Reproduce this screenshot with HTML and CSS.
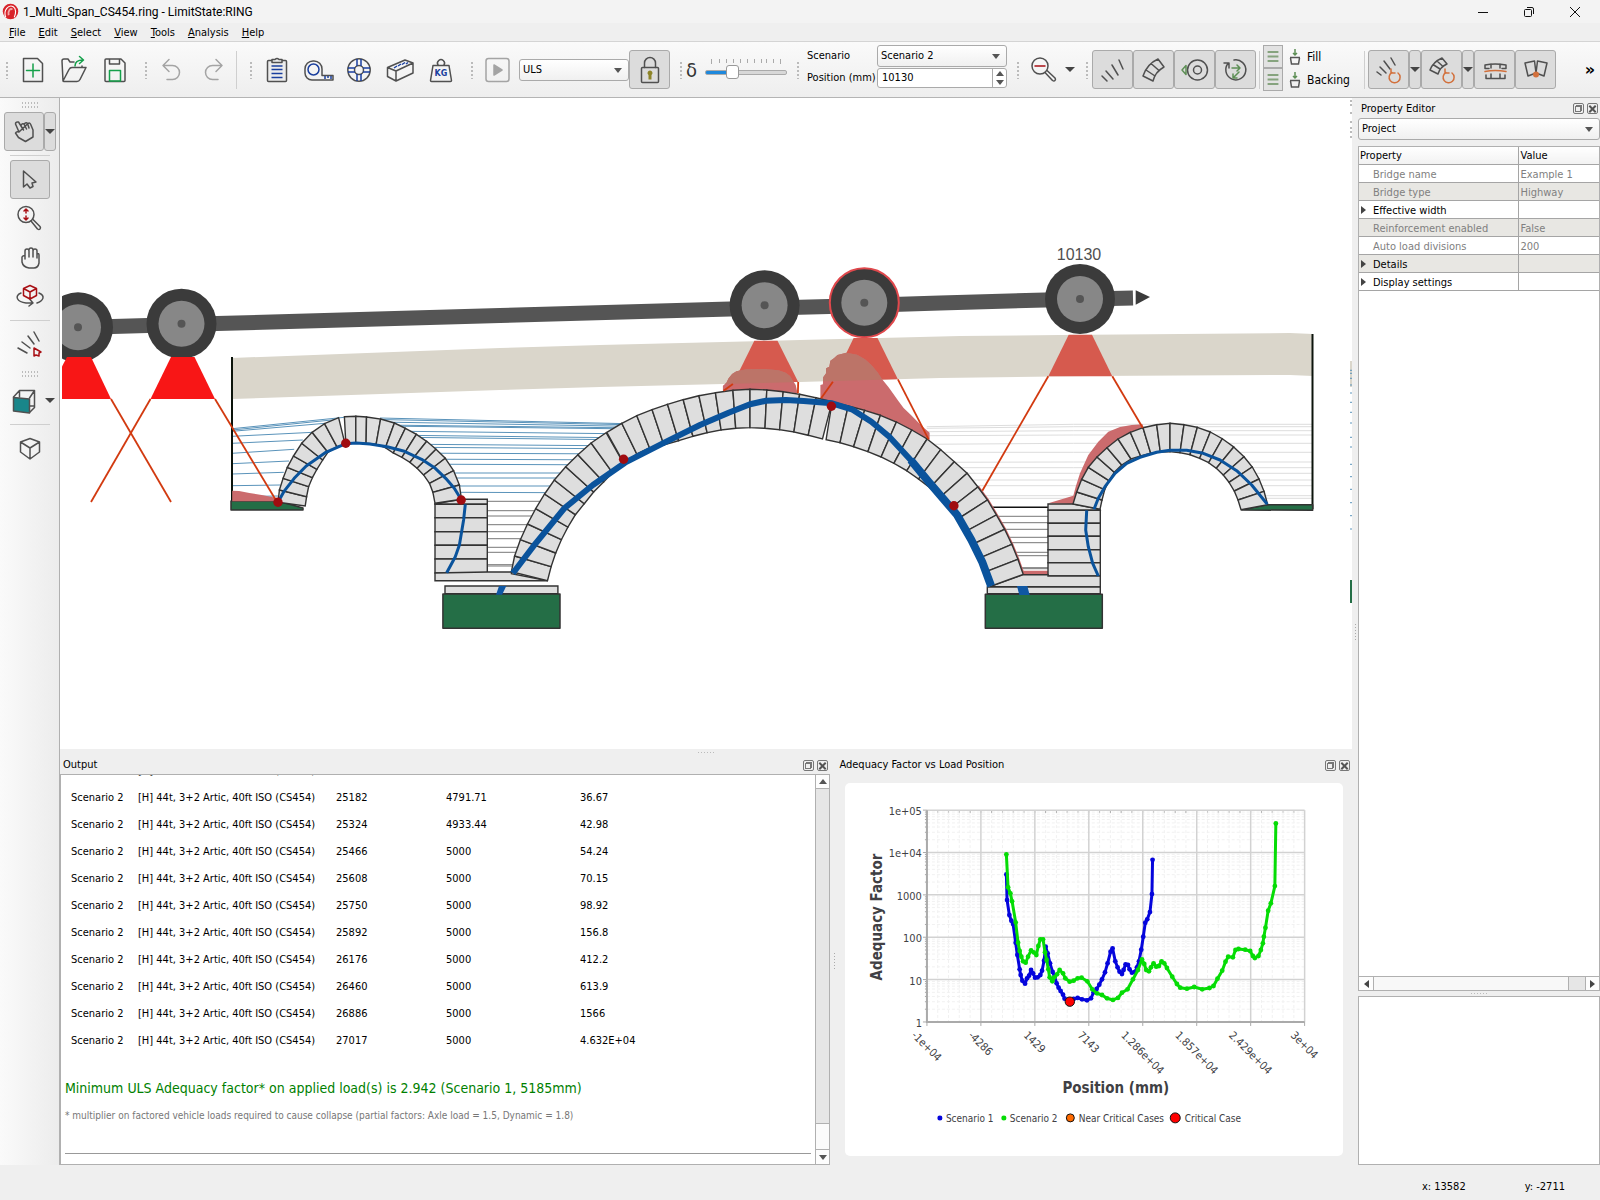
FILE: index.html
```
<!DOCTYPE html>
<html lang="en">
<head>
<meta charset="utf-8">
<title>1_Multi_Span_CS454.ring - LimitState:RING</title>
<meta name="viewport" content="width=device-width, initial-scale=1">
<link rel="stylesheet" href="styles.css">
</head>
<body>
<header class="titlebar">
  <svg class="logo" viewBox="0 0 18 18"><circle cx="9" cy="9" r="8.2" fill="#d8232a"/><path d="M4 15C1 8 7 1 12 4c3 2 3 7 1 11" fill="none" stroke="#fff" stroke-width="1.2"/><path d="M7 13c-1-5 2-8 4-6" fill="none" stroke="#f3a5a5" stroke-width="2"/></svg>
  <h1>1_Multi_Span_CS454.ring - LimitState:RING</h1>
  <div class="winbtns">
    <button aria-label="Minimise"><svg viewBox="0 0 12 12"><path d="M1 6.5h10"/></svg></button>
    <button aria-label="Restore"><svg viewBox="0 0 12 12"><rect x="1.5" y="3.5" width="7" height="7" rx="1"/><path d="M4 1.5h5a1.500 1.500 0 0 1 1.500 1.500v5"/></svg></button>
    <button aria-label="Close"><svg viewBox="0 0 12 12"><path d="M1 1l10 10M11 1L1 11"/></svg></button>
  </div>
</header>
<nav class="menubar">
  <a href="#"><u>F</u>ile</a>
  <a href="#"><u>E</u>dit</a>
  <a href="#"><u>S</u>elect</a>
  <a href="#"><u>V</u>iew</a>
  <a href="#"><u>T</u>ools</a>
  <a href="#"><u>A</u>nalysis</a>
  <a href="#"><u>H</u>elp</a>
</nav>

<div class="toolbar">
  <span class="grip first"></span>
  <button class="tool" aria-label="New"><svg viewBox="0 0 32 32"><path d="M6.500 4.500h14l5 5v18h-19z"/><path class="green" d="M16 10v13M9.500 16.500h13"/></svg></button>
  <button class="tool" aria-label="Open"><svg viewBox="0 0 32 32"><path d="M5 27L4 7q0-2 2-2h4l2 3h4M24 13.500V12M5 27q0 .5 1 .5h13q2 0 3-2l6-12H14q-2 0-3 2z"/><path class="green" d="M17 12c0-4 3-6 8-6M21.500 2.500l4 3.500-4 3.500"/></svg></button>
  <button class="tool" aria-label="Save"><svg viewBox="0 0 32 32"><path d="M7 5h15l4 4v17.500q0 1-1 1H7q-1 0-1-1V6q0-1 1-1zM10.500 5v5h10V5"/><path class="green" d="M10.500 27V16.500h11V27z"/></svg></button>
  <span class="grip"></span>
  <button class="tool off" aria-label="Undo"><svg viewBox="0 0 32 32"><path d="M13 5.500l-6 6 6 6M7 11.500h9.500a7 7 0 0 1 0 14H11"/></svg></button>
  <button class="tool off" aria-label="Redo"><svg viewBox="0 0 32 32"><path d="M19 5.500l6 6-6 6M25 11.500h-9.500a7 7 0 0 0 0 14H21"/></svg></button>
  <span class="sep"></span>
  <span class="grip"></span>
  <button class="tool" aria-label="Project details"><svg viewBox="0 0 32 32"><rect x="6.500" y="6.500" width="19" height="21" rx="1" fill="#ececec"/><path fill="#ececec" d="M11 8.500v-3h3q2-2 4 0h3v3z"/><path class="blue" d="M10.500 12h11M10.500 15.500h11M10.500 19.500h11M10.500 23.500h11"/></svg></button>
  <button class="tool" aria-label="Geometry"><svg viewBox="0 0 32 32"><path d="M31 26H10a7 7 0 0 1-7-7v-4a8 8 0 0 1 8-8h1a8 8 0 0 1 8 8v6.500h11z"/><circle class="blue" cx="11.500" cy="15.500" r="5.500"/><path class="blue" d="M23 22v3M26 22v2M29 22v3"/></svg></button>
  <button class="tool" aria-label="Partial factors"><svg viewBox="0 0 32 32"><circle cx="16" cy="16" r="11.200"/><circle cx="16" cy="16" r="4.500"/><path class="blue" d="M14 5v7M18 5v7M14 20v7M18 20v7M5 14h7M5 18h7M20 14h7M20 18h7"/></svg></button>
  <button class="tool" aria-label="Materials"><svg viewBox="0 0 32 32"><path d="M3.500 13.500L21 6l8 3-17 8zM3.500 13.500v9l8.500 4.500V17M12 27l17-8V9"/><path class="blue" d="M10 14l3-2M14 12l3-2M18 10.500l3-2M22 10l2-1.500"/></svg></button>
  <button class="tool" aria-label="Vehicles"><svg viewBox="0 0 32 32"><path d="M8 11.500h16l2.500 15q0 1-1 1h-19q-1 0-1-1z"/><path d="M13 11a3.500 3.500 0 1 1 6 0"/><text class="kg" x="16" y="22">KG</text></svg></button>
  <span class="grip"></span>
  <button class="tool off" aria-label="Solve"><svg viewBox="0 0 32 32"><rect x="4" y="4.500" width="23" height="23" rx="2.500"/><path d="M12 11l8 5-8 5z" fill="#a4a4a4"/></svg></button>
  <span class="combo mode"><select aria-label="Limit state"><option>ULS</option><option>SLS</option></select></span>
  <button class="tool on" aria-label="Lock"><svg viewBox="0 0 32 32"><rect x="7.500" y="13.500" width="17" height="15" rx="1"/><path d="M10.500 13.500V9a5.500 5.500 0 0 1 11 0v4.500"/><path d="M16 16.500a2.500 2.500 0 0 1 1.500 4.500v4.500h-3V21a2.500 2.500 0 0 1 1.500-4.500z" fill="#8d8427" stroke="none"/></svg></button>
  <span class="grip"></span>
  <div class="delta">
    <label for="scale">δ</label>
    <div class="sliderbox">
      <svg class="ticks" viewBox="0 0 82 5"><path d="M6.500 0v5M14.500 0v4M21.500 0v4M28.500 0v4M35.500 0v4M42.500 0v4M49.500 0v4M56.500 0v4M61.500 0v4M68.500 0v4M75.500 0v5"/></svg>
      <input type="range" id="scale" min="0" max="100" value="30">
    </div>
  </div>
  <span class="grip"></span>
  <div class="scenario">
    <label for="scen">Scenario</label>
    <span class="combo"><select id="scen"><option>Scenario 1</option><option selected>Scenario 2</option></select></span>
    <label for="pos">Position (mm)</label>
    <span class="spin"><input type="text" id="pos" value="10130"><span class="steps"><button class="up" aria-label="Increase"></button><button class="down" aria-label="Decrease"></button></span></span>
  </div>
  <span class="grip"></span>
  <button class="tool" aria-label="Zoom out"><svg viewBox="0 0 32 32"><circle cx="12" cy="12" r="8"/><path d="M17 18.500l7.500 8q1.500 1 2.500 0t0-2.500l-8-7.500"/><path class="red" d="M7 12h10"/></svg></button>
  <button class="drop bare" aria-label="Zoom options"></button>
  <span class="grip"></span>
  <button class="tool on" aria-label="Rays"><svg viewBox="0 0 32 32"><path d="M5 22l5 5M9 17l7 8M15 11l6 10M22 6l4 9"/></svg></button>
  <button class="tool on" aria-label="Arch blocks"><svg viewBox="0 0 32 32"><path d="M5 22Q9 10 20 5l6 8q-9 5-11 14zM8 16l9 6M13 9.500l8 7"/></svg></button>
  <button class="tool on" aria-label="Loads"><svg viewBox="0 0 32 32"><circle cx="18.500" cy="16" r="10"/><circle cx="18.500" cy="16" r="4"/><path class="moss" d="M7 11.500v9L3 16z"/></svg></button>
  <button class="tool on" aria-label="Recalculate"><svg viewBox="0 0 32 32"><path d="M8.500 9a10 10 0 1 0 5.500-3M4 9h5v5"/><path class="moss" d="M12 14h8M17 11l3 3-3 3M19 18l-6 6M13 20v4h4"/></svg></button>
  <span class="sep"></span>
  <div class="layers">
    <button class="layer" aria-label="Show fill"><svg viewBox="0 0 20 22"><path d="M4 6h12M4 11h12M4 16h12"/></svg></button>
    <svg class="bucket" viewBox="0 0 12 16"><path d="M1 8.500h10M1.500 9l1 6h7l1-6"/><path class="moss" d="M6 0v6M4 4l2 2 2-2"/></svg><span>Fill</span>
    <button class="layer" aria-label="Show backing"><svg viewBox="0 0 20 22"><path d="M4 6h12M4 11h12M4 16h12"/></svg></button>
    <svg class="bucket" viewBox="0 0 12 16"><path d="M1 8.500h10M1.500 9l1 6h7l1-6"/><path class="moss" d="M6 0v6M4 4l2 2 2-2"/></svg><span>Backing</span>
  </div>
  <span class="sep"></span>
  <button class="tool on" aria-label="Reset rays"><svg viewBox="0 0 32 32"><path d="M4 18l4 3M7 13l6 6M11 7l6 8M18 4l4 7"/><path class="rust" d="M19 18.500a5.500 5.500 0 1 0 6 .5M18 15v4h4"/></svg></button>
  <button class="drop on" aria-label="Reset rays options"></button>
  <button class="tool on" aria-label="Reset blocks"><svg viewBox="0 0 32 32"><path d="M4 16Q7 8 16 4l5 6q-7 3-9 10zM7 10.500l7 4.500M11 7l6 5.500"/><path class="rust" d="M20 18.500a5.500 5.500 0 1 0 6 .5M19 15v4h4"/></svg></button>
  <button class="drop on" aria-label="Reset blocks options"></button>
  <button class="tool on" aria-label="Thrust line"><svg viewBox="0 0 32 32"><path d="M6 14.500V11q10-2 21 0v3.500M12 10v4M21 10v4M6 14.500h4M27 14.500h-4M7 21v3.500h5M26 21v3.500h-5M12 20v4.500h9V20"/><path class="rust" d="M6 17.500q10-2 21 0"/></svg></button>
  <button class="tool on" aria-label="Hinges"><svg viewBox="0 0 32 32"><path d="M5 9l9.500-2L16 19l-8 3zM27 9l-9.500-2L16 19l8 3z"/><circle cx="16" cy="20.500" r="3" fill="#d2703c" stroke="none"/></svg></button>
  <button class="more" aria-label="More tools">»</button>
</div>

<main class="work">
  <aside class="sidebar">
    <span class="hgrip"></span>
    <div class="pair">
      <button class="tool on" aria-label="Pick"><svg viewBox="0 0 32 32"><path d="M11 16L7.500 8q0-2 2-2h1l5 8M13 9.500q1-2.500 3-1.500l2.500 5M16.500 7.500q2-1.500 3 0l1.500 4.500M20 7.500q2-1 2.500.500l2.500 6v7l-7.500 4.500-7-4-3-4.500q1-2 3.500-1z"/></svg></button>
      <button class="drop on" aria-label="Pick options"></button>
    </div>
    <span class="hsep"></span>
    <button class="tool on" aria-label="Select"><svg viewBox="0 0 32 32"><path d="M9.500 7v16l3.500-3 3 4 3-1.500-1-3.500 4-1z"/></svg></button>
    <button class="tool" aria-label="Zoom"><svg viewBox="0 0 32 32"><circle cx="12" cy="11.500" r="8"/><path d="M17 18l6.500 8q1.500 1 2.500 0t0-2.500L19 16.500"/><path class="red" d="M12 6v4M12 17v-4M10 8l2-2 2 2M10 15l2 2 2-2"/></svg></button>
    <button class="tool" aria-label="Pan"><svg viewBox="0 0 32 32"><path d="M11 17V9q0-2 2-2t2 2v6M15 8q0-2 2-2t2 2v7M19 9q0-2 2-2t2 2v7M23 12q2-1 2 1v8q-1 5-5 5h-5q-6-1-7-6v-5q1-2 3-1"/></svg></button>
    <button class="tool" aria-label="Rotate view"><svg viewBox="0 0 32 32"><path d="M7 12c-7 3-4 9 5 10h7M25 12c7 3 4 8-2 10M16 18.500l3 3.500-4 3"/><path class="red" d="M16 4.500l6.500 3v7L16 18l-6.500-3.500v-7zM9.500 7.500L16 11l6.500-3.500M16 11v7"/></svg></button>
    <span class="hsep"></span>
    <button class="tool" aria-label="Select rays"><svg viewBox="0 0 32 32"><path d="M4 19l9 5M8 13l8 6M14 7l6 8M20 3l5 9"/><path class="red" d="M20 19v8l2-1 3 1v-3l2-1z"/></svg></button>
    <span class="hgrip mid"></span>
    <div class="pair">
      <button class="tool" aria-label="View direction"><svg viewBox="0 0 32 32"><path d="M5.500 12l6-6.500h15l-5 7.500M26.500 5.500v17l-5 5M11.500 5.500V12M21.500 21h5"/><path d="M5.500 12.500l16 1.500v14l-16-2z" fill="#19868a"/></svg></button>
      <button class="drop bare" aria-label="View direction options"></button>
    </div>
    <span class="hsep"></span>
    <button class="tool" aria-label="3D view"><svg viewBox="0 0 32 32"><path d="M6.500 9L16 5.500 25.500 9v10L16 26l-9.500-7zM6.500 9l9.500 6 9.500-6M16 15v11"/></svg></button>
  </aside>

  <section class="center">
    <div class="view"><svg id="bridge" viewBox="62 98 1290 651" preserveAspectRatio="xMidYMid slice"></svg></div>
    <div class="splitter"><span class="hgrip"></span></div>
    <div class="docks">
      <section class="dock output">
        <h2>Output <span class="dockbtns"><button class="float" aria-label="Float"></button><button class="close" aria-label="Close"></button></span></h2>
        <div class="frame">
          <div class="log">
            <table id="results"><tbody></tbody></table>
            <p class="minimum">Minimum ULS Adequacy factor* on applied load(s) is 2.942 (Scenario 1, 5185mm)</p>
            <p class="note">* multiplier on factored vehicle loads required to cause collapse (partial factors: Axle load = 1.5, Dynamic = 1.8)</p>
            <hr>
          </div>
          <div class="vscroll"><button class="up" aria-label="Scroll up"></button><span class="track"></span><span class="thumb"></span><button class="down" aria-label="Scroll down"></button></div>
        </div>
      </section>
      <div class="vsplit"><span class="vgrip"></span></div>
      <section class="dock plot">
        <h2>Adequacy Factor vs Load Position <span class="dockbtns"><button class="float" aria-label="Float"></button><button class="close" aria-label="Close"></button></span></h2>
        <div class="card"><svg id="chart" viewBox="0 0 498 373"></svg></div>
      </section>
    </div>
  </section>

  <div class="vsplit right"><span class="vgrip"></span></div>

  <aside class="dock props">
    <h2>Property Editor <span class="dockbtns"><button class="float" aria-label="Float"></button><button class="close" aria-label="Close"></button></span></h2>
    <span class="combo"><select aria-label="Object"><option>Project</option></select></span>
    <div class="proplist">
      <table>
        <thead><tr><th>Property</th><th>Value</th></tr></thead>
        <tbody>
          <tr class="dim"><td>Bridge name</td><td>Example 1</td></tr>
          <tr class="dim"><td>Bridge type</td><td>Highway</td></tr>
          <tr class="group"><td>Effective width</td><td></td></tr>
          <tr class="dim"><td>Reinforcement enabled</td><td>False</td></tr>
          <tr class="dim"><td>Auto load divisions</td><td>200</td></tr>
          <tr class="group"><td>Details</td><td></td></tr>
          <tr class="group"><td>Display settings</td><td></td></tr>
        </tbody>
      </table>
      <div class="hscroll"><button class="left" aria-label="Scroll left"></button><span class="thumb"></span><span class="track"></span><button class="rightarrow" aria-label="Scroll right"></button></div>
    </div>
    <div class="splitter"><span class="hgrip"></span></div>
    <div class="help"></div>
  </aside>
</main>

<footer class="status"><span>x: 13582</span><span>y: -2711</span></footer>
<script src="app.js"></script>
</body>
</html>
```
FILE: styles.css
```
* {box-sizing: border-box;}
html, body {height: 100%; margin: 0;}
body {display: flex; flex-direction: column; overflow: hidden; background: #efefef; color: #000; font: 11px/14px "DejaVu Sans Condensed", "DejaVu Sans", sans-serif;}
button, select, input {font: inherit; color: inherit; margin: 0; padding: 0;}
button {background: none; border: 0;}
svg {display: block;}

.titlebar {display: flex; align-items: center; flex: none; height: 23px; padding-left: 2px; background: #f3f3f3;}
.titlebar h1 {margin: 0 auto 0 4px; font: 12px/16px Roboto, sans-serif;}
.logo {width: 17px; height: 17px;}
.winbtns {display: flex; padding-right: 2px;}
.winbtns button {width: 46px; height: 20px; display: flex; align-items: center; justify-content: center;}
.winbtns svg {width: 12px; height: 12px; fill: none; stroke: #111;}

.menubar {display: flex; flex: none; gap: 13px; height: 18px; padding-left: 9px; line-height: 19px;}
.menubar a {color: #000; text-decoration: none;}

/* main toolbar */
.toolbar {display: flex; align-items: center; flex: none; height: 57px; border-top: 1px solid #d4d4d4; border-bottom: 1px solid #b4b4b4; background: linear-gradient(#fafafa, #eee);}
.grip {flex: none; width: 10px; height: 18px; margin-left: 6px; background: radial-gradient(circle, #bbb 1px, transparent 1px) 3px 0/4px 4px; background-clip: content-box; padding: 0 3px;}
.grip.first {margin-left: 2px;}
.sep {flex: none; width: 1px; height: 38px; margin: 0 3px; background: #cfcfcf;}
.tool {flex: none; width: 41px; height: 39px; display: flex; align-items: center; justify-content: center; border: 1px solid transparent; border-radius: 3px;}
.tool svg {width: 32px; height: 32px; fill: none; stroke: #505050; stroke-width: 1.5; stroke-linecap: round; stroke-linejoin: round;}
.tool.off svg {stroke: #a4a4a4;}
.tool.on, .drop.on {background: #dcdcdc; border: 1px solid #aaa;}
.tool svg .green {stroke: #14a04a;}
.tool svg .blue {stroke: #1a3f9e; stroke-linecap: butt;}
.tool svg .red {stroke: #a80f14;}
.tool svg .rust {stroke: #d2703c;}
.tool svg .moss {stroke: #5d8f55;}
.tool .kg {font: bold 8px "DejaVu Sans", sans-serif; fill: #1a3f9e; stroke: none; text-anchor: middle;}
.drop {flex: none; width: 12px; height: 39px; border-radius: 3px; display: flex; align-items: center; justify-content: center;}
.drop::after {content: ""; border: 5px solid transparent; border-top: 5px solid #444; border-bottom: 0;}
.more {margin-left: auto; padding-right: 5px; font: bold 16px/20px "DejaVu Sans", sans-serif;}

.combo {position: relative; display: block;}
.combo::after {content: ""; position: absolute; right: 7px; top: 9px; border: 4px solid transparent; border-top: 5px solid #555; border-bottom: 0; pointer-events: none;}
.combo select {display: block; width: 100%; height: 22px; padding: 0 3px; appearance: none; border: 1px solid #aaa; border-radius: 3px; background: linear-gradient(#fff, #f0f0f0);}
.combo.mode {width: 110px; margin: 0 0 0 1px;}
.delta {display: flex; align-items: center; width: 101px; justify-content: space-between;}
.delta label {font-size: 20px; line-height: 24px; color: #333;}
.sliderbox {width: 82px;}
.ticks {width: 82px; height: 5px; stroke: #aaa;}
.sliderbox input {display: block; width: 82px; height: 16px; appearance: none; background: none;}
.sliderbox input::-webkit-slider-runnable-track {height: 5px; border: 1px solid #aaa; border-radius: 2px; background: linear-gradient(90deg, #1e88dc 30%, #d8d8d8 30%);}
.sliderbox input::-webkit-slider-thumb {appearance: none; width: 13px; height: 14px; margin-top: -6px; border: 1px solid #999; border-radius: 3px; background: #fff;}
.scenario {display: grid; grid-template-columns: 70px 130px; gap: 1px 0; align-items: center; align-self: flex-start; padding: 3px 0 0 4px;}
.spin {display: flex; height: 20px; border: 1px solid #aaa; border-radius: 3px; background: #fff;}
.spin input {flex: 1; min-width: 0; border: 0; padding: 0 4px; background: none;}
.steps {display: flex; flex-direction: column; width: 14px; border-left: 1px solid #aaa;}
.steps button {flex: 1; display: flex; align-items: center; justify-content: center;}
.up::after, .down::after {content: ""; border: 4px solid transparent;}
.up::after {border-bottom: 5px solid #555; border-top: 0;}
.down::after {border-top: 5px solid #555; border-bottom: 0;}
.layers {display: grid; grid-template-columns: 20px 12px auto; gap: 0 6px; align-items: center; align-self: flex-start; width: 98px; padding-top: 3px; font-size: 12px;}
.layer {width: 20px; height: 23px; border: 1px solid #aaa; background: #e2e2e2;}
.layer svg {width: 18px; height: 21px; fill: none; stroke: #86a37e; stroke-width: 2;}
.bucket {width: 12px; height: 16px; fill: none; stroke: #555; stroke-width: 1.5;}
.bucket .moss {stroke: #5d8f55;}

/* work area */
.work {flex: 1; min-height: 0; display: flex;}
.sidebar {flex: none; width: 60px; padding-top: 3px; display: flex; flex-direction: column; align-items: center; border-right: 1px solid #b0b0b0; background: linear-gradient(90deg, #fafafa, #ececec);}
.sidebar .tool {width: 40px; height: 39px;}
.sidebar .pair {display: flex;}
.hgrip {flex: none; width: 18px; height: 8px; background: radial-gradient(circle, #bbb 1px, transparent 1px) 0 0/3px 4px;}
.sidebar .hgrip {margin-bottom: 3px;}
.sidebar .hgrip.mid {margin: 6px 0 3px;}
.hsep {flex: none; width: 40px; height: 1px; margin: 4px 0; background: #cfcfcf;}
.center {flex: 1; min-width: 0; display: flex; flex-direction: column;}
.view {flex: 1; min-height: 0; padding-left: 2px; background: #fff;}
.view svg {width: 100%; height: 100%;}
.splitter {flex: none; height: 7px; display: flex; align-items: center; justify-content: center;}
.splitter .hgrip {height: 3px; background-size: 3px 3px;}
.docks {flex: none; height: 409px; display: flex;}
.vsplit {flex: none; width: 8px; display: flex; align-items: center; justify-content: center;}
.vsplit.right {width: 6px;}
.vgrip {width: 3px; height: 18px; background: radial-gradient(circle, #aaa 1px, transparent 1px) 0 0/3px 3px;}

.dock {display: flex; flex-direction: column; min-width: 0;}
.dock h2 {flex: none; display: flex; justify-content: space-between; align-items: center; margin: 0; height: 18px; padding: 0 2px 0 3px; font-size: 11px; font-weight: normal;}
.dockbtns {display: flex; gap: 3px;}
.dockbtns button {position: relative; width: 11px; height: 11px; border: 1px solid #777; border-radius: 2px;}
.float::before, .float::after {content: ""; position: absolute; width: 4px; height: 4px; border: 1px solid #777; background: #efefef;}
.float::before {right: 1px; top: 1px;}
.float::after {left: 1px; bottom: 1px;}
.close::before, .close::after {content: ""; position: absolute; left: 0; top: 4px; width: 9px; height: 2px; background: #555; transform: rotate(45deg);}
.close::after {transform: rotate(-45deg);}
.output {flex: 3;}
.plot {flex: 2;}
.dock.plot h2 {padding-left: 1px;}
.frame {flex: 1; min-height: 0; display: flex; border: 1px solid #b0b0b0; background: #fff;}
.log {flex: 1; min-width: 0; display: flex; flex-direction: column; justify-content: flex-end; overflow: hidden; padding: 0 4px 10px;}
.log table {border-collapse: collapse; table-layout: fixed; width: 680px;}
.log td {height: 27px; padding: 0 0 0 6px; white-space: nowrap;}
.log td:nth-child(1) {width: 67px;}
.log td:nth-child(2) {width: 198px;}
.log td:nth-child(3) {width: 110px;}
.log td:nth-child(4) {width: 134px;}
.log p {margin: 0; white-space: nowrap;}
.log .minimum {margin-top: 24px; font-size: 14px; line-height: 20px; color: #007f00;}
.log .note {margin-top: 11px; font-size: 10px; color: #777;}
.log hr {width: 100%; margin: 30px 0 0; border: 0; border-top: 1px solid #999;}
.vscroll {flex: none; width: 14px; display: flex; flex-direction: column; border-left: 1px solid #b0b0b0; background: #e6e6e6;}
.vscroll button {height: 14px; display: flex; align-items: center; justify-content: center; background: #fdfdfd;}
.vscroll .up {border-bottom: 1px solid #b0b0b0;}
.track {flex: 1;}
.vscroll .thumb {height: 27px; border: 1px solid #b0b0b0; border-width: 1px 0; background: #fbfbfb;}
.card {flex: 1; min-height: 0; margin: 9px 9px 9px 7px; border-radius: 5px; background: #fff;}
.card svg {width: 100%; height: 100%;}

.props {flex: none; width: 242px; padding-top: 1px;}
.props h2 {height: 19px;}
.proplist {flex: 1; min-height: 0; margin-top: 6px; display: flex; flex-direction: column; justify-content: space-between; border: 1px solid #b0b0b0; background: #fff;}
.proplist table {width: 100%; table-layout: fixed; border-collapse: collapse;}
.proplist th, .proplist td {height: 18px; padding: 2px 0 0 2px; text-align: left; font-weight: normal; border-bottom: 1px solid #a5a5a5; line-height: 15px;}
.proplist th {height: 17px; padding-top: 1px;}
.proplist th:first-child {width: 159px; padding-left: 1px;}
.proplist th + th, .proplist td + td {border-left: 1px solid #a5a5a5;}
.proplist th {background: linear-gradient(#fff, #f2f2f2);}
.proplist td:first-child {padding-left: 14px;}
.proplist tbody tr:nth-child(2), .proplist tbody tr:nth-child(4), .proplist tbody tr:nth-child(6) {background: #e8e7e3;}
.proplist .dim {color: #808080;}
.proplist .group td:first-child {padding-left: 2px;}
.proplist .group td:first-child::before {content: ""; display: inline-block; margin-right: 7px; border: 4px solid transparent; border-left: 5px solid #444; border-right: 0;}
.hscroll {display: flex; height: 14px; border-top: 1px solid #b0b0b0; background: #e6e6e6;}
.hscroll button {width: 14px; display: flex; align-items: center; justify-content: center; background: #fdfdfd;}
.hscroll .thumb {width: 196px; border: 1px solid #b0b0b0; border-width: 0 1px; background: #f8f8f8;}
.hscroll .rightarrow {border-left: 1px solid #b0b0b0;}
.left::after, .rightarrow::after {content: ""; border: 4px solid transparent;}
.left::after {border-right: 5px solid #444; border-left: 0;}
.rightarrow::after {border-left: 5px solid #444; border-right: 0;}
.props .splitter {height: 5px;}
.help {flex: none; height: 169px; border: 1px solid #b0b0b0; background: #fff;}
.status {flex: none; display: flex; justify-content: flex-end; align-items: center; gap: 59px; height: 35px; padding: 8px 35px 0 0;}

/* bridge drawing */
.surface {fill: #dad6cb;}
.wall {stroke: #0c140c; stroke-width: 2;}
.soil {fill: #246e46; stroke: #333; stroke-width: 1.5; stroke-linejoin: round;}
.soil.edge {stroke: none;}
.block {fill: #dedede; stroke: #333; stroke-width: 1.4;}
.void {fill: #fff;}
.thrust {fill: none; stroke: #0a539c; stroke-width: 3; stroke-linejoin: round;}
.thrust.wide {stroke-width: 6;}
.thrust.wider {stroke-width: 8;}
.mark {fill: #0f57a3;}
.hinge {fill: #a00c10;}
.passive {stroke: #5a93ba; stroke-width: 1;}
.idle {stroke: #ddd; stroke-width: 1;}
.backing {stroke: #777; stroke-width: 1;}
.backing.firm {stroke: #111; stroke-width: 1.5;}
.spread {stroke: #d23a10; stroke-width: 1.8;}
.cone {fill: #f81616;}
.cone.active {fill: #d65a4e;}
.pressure {fill: #cb6b6d;}
.pressure.shaded {fill: #bc7468;}
.graze {fill: none; stroke: #c66; stroke-width: 3;}
.axle {fill: none; stroke: #555; stroke-width: 15;}
.tyre {fill: #3b3b3b;}
.tyre.critical {stroke: #e0484c; stroke-width: 2;}
.rim {fill: #878787;}
.hub {fill: #555;}
.arrow {fill: #3b3b3b;}
.postext {font: 16px "Liberation Sans", sans-serif; fill: #505050; text-anchor: middle;}

/* chart */
.major {stroke: #d2d2d2; stroke-width: 1.5;}
.minor {stroke: #f1f1f1; stroke-width: 1; stroke-dasharray: 3 2;}
.axis {stroke: #aaa; stroke-width: 2;}
.tick {stroke: #aaa; stroke-width: 1;}
.axlabel {font-size: 11px; fill: #404044;}
.axlabel.y {text-anchor: end;}
.axtitle {font-size: 15px; font-weight: bold; fill: #404044; text-anchor: middle;}
.s1 {fill: none; stroke: #0505dc; stroke-width: 3; stroke-linejoin: round;}
.s2 {fill: none; stroke: #05dc05; stroke-width: 3; stroke-linejoin: round;}
.d1 {fill: #0505dc;}
.d2 {fill: #05dc05;}
.near {fill: #ff6a00; stroke: #111; stroke-width: 1;}
.crit {fill: #f00; stroke: #111; stroke-width: 1;}
.legend {font-size: 10px; fill: #404044;}
```
FILE: app.js
```
var NS = "http://www.w3.org/2000/svg";

function add(parent, name, cls, attrs) {
  var node = document.createElementNS(NS, name);
  node.setAttribute("class", cls);
  for (var k in attrs) node.setAttribute(k, attrs[k]);
  parent.appendChild(node);
  return node;
}

// each part of the model has its own origin and scale
function sheet(ox, oy, kx, ky) {
  return function(list) {
    var out = [];
    for (var i = 0; i < list.length; i += 2) {
      out.push([Math.round((ox + list[i] / kx) * 10) / 10, Math.round((oy + list[i + 1] / ky) * 10) / 10]);
    }
    return out;
  };
}

function poly(parent, cls, pts) { return add(parent, "polygon", cls, {points: pts.join(" ")}); }
function line(parent, cls, pts) { return add(parent, "polyline", cls, {points: pts.join(" "), fill: "none"}); }

// ---- results table
var rows = [
  ["25040", "4650", "31.54"], ["25182", "4791.71", "36.67"], ["25324", "4933.44", "42.98"],
  ["25466", "5000", "54.24"], ["25608", "5000", "70.15"], ["25750", "5000", "98.92"],
  ["25892", "5000", "156.8"], ["26176", "5000", "412.2"], ["26460", "5000", "613.9"],
  ["26886", "5000", "1566"], ["27017", "5000", "4.632E+04"]
];
var tbody = document.querySelector("#results tbody");
rows.forEach(function(r) {
  var tr = tbody.insertRow();
  ["Scenario 2", "[H] 44t, 3+2 Artic, 40ft ISO (CS454)"].concat(r).forEach(function(t) {
    tr.insertCell().textContent = t;
  });
});

// ---- bridge
var b = document.getElementById("bridge");
var A = sheet(60, 260, 2.904, 3);
var B = sheet(500, 250, 2.8, 3);
var C = sheet(940, 230, 3, 3);

var arch1 = [
  {out: A([633,727, 637,690, 648,655, 660,622, 678,588, 702,550, 732,517, 768,491, 809,473]),
   inn: A([712,738, 716,710, 722,680, 733,653, 746,628, 763,600, 778,577, 804,560, 828,553])},
  {out: A([826,470, 859,469, 890,471, 931,477, 971,489, 1003,505, 1035,523, 1065,544, 1092,568, 1119,595, 1143,632, 1160,675, 1166,718]),
   inn: A([830,550, 859,550, 889,550, 918,553, 945,563, 968,579, 993,592, 1016,607, 1037,625, 1056,645, 1073,670, 1083,697, 1089,730])}
];
var arch2 = [
  {out: B([32,965, 41,918, 57,869, 77,822, 100,776, 125,732, 152,690, 184,650, 218,614, 255,579, 297,548]),
   inn: B([133,992, 143,950, 156,909, 172,869, 190,831, 211,794, 236,761, 262,726, 290,696, 315,668, 346,640])},
  {out: B([299,547, 341,520, 383,497, 426,479, 469,463, 513,449, 557,437, 603,428, 652,421, 700,418, 747,420, 793,425, 839,433, 885,443, 930,455]),
   inn: B([347,639, 383,612, 419,594, 459,585, 500,572, 540,559, 580,548, 619,540, 660,535, 700,533, 742,535, 783,539, 823,546, 863,556, 903,567])},
  {out: B([930,456, 975,468, 1021,481, 1065,496, 1110,516, 1153,540, 1196,567, 1234,599, 1272,635, 1308,670, 1338,711, 1365,750, 1390,795, 1413,838, 1433,883, 1450,928, 1465,973]),
   inn: B([913,569, 952,578, 990,590, 1030,605, 1067,621, 1103,640, 1139,662, 1172,687, 1204,713, 1233,741, 1262,775, 1285,805, 1308,842, 1325,882, 1341,925, 1356,967, 1380,1006])}
];
var arch3 = [
  {out: C([399,822, 410,786, 425,748, 445,712, 471,681, 501,653, 534,627, 571,607, 609,593, 650,584, 690,580, 732,584, 772,592, 811,606, 847,626, 881,651, 912,680, 937,711, 957,747, 972,784, 983,824]),
   inn: C([480,838, 486,810, 494,779, 507,752, 523,727, 545,705, 573,687, 602,678, 632,670, 661,666, 690,665, 720,668, 750,674, 779,685, 806,698, 829,715, 850,735, 867,757, 883,783, 894,810, 903,839])}
];

function drawVoid(parts) {
  var pts = [];
  parts.forEach(function(p) { pts = pts.concat(p.inn); });
  poly(b, "void", pts);
}
function drawArch(parts) {
  parts.forEach(function(p) {
    for (var i = 0; i < p.out.length - 1; i++) {
      poly(b, "block", [p.out[i], p.out[i + 1], p.inn[i + 1], p.inn[i]]);
    }
  });
}

var surface = [[232,358],[500,348],[600,345],[800,340],[960,336],[1060,335],[1290,333],[1313,334],[1313,376],[1290,375],[1090,376],[940,378],[800,382],[600,387],[500,390],[232,399]];
poly(b, "surface", surface);
poly(add(b, "clipPath", "", {id: "surfacing"}), "", surface);

// passive pressure lines, left of and between the first two spans
[[506,826,472],[510,809,478],[514,770,490],[529,735,517],[550,705,540],[580,680,568],[611,665,603],[642,650,637],[677,640,675],[710,633,708]].forEach(function(l) {
  line(b, "passive", A([500, l[0], l[1], l[2]]));
});
[[418,424],[419.5,425],[422,426.5],[425,428],[426,429],[431,434],[435,438],[437,440],[444,446],[447,449],[453,454],[459,460],[464,465],[473,473],[478,478],[486,486],[492,493]].forEach(function(l) {
  line(b, "passive", [[380, l[0]], [640, l[1]]]);
});
[724,752,768,794,815,836,862,877,914,918].forEach(function(y) {
  line(b, "backing", A([1241, y, 1400, y]));
});
[[590,583],[595,590],[605,602],[617,615],[643,640],[667,667],[697,696],[713,713],[730,730],[750,750],[767,767],[797,797],[805,805]].forEach(function(l) {
  line(b, "idle", C([-40, l[0], 400, l[1], 1117, l[1]]));
});
line(b, "backing firm", C([140,832, 324,832]));
[859,878,898,922,938,967,977,1013,1016].forEach(function(y) {
  line(b, "backing", C([140, y, 324, y]));
});
[arch1, arch2, arch3].forEach(drawVoid);

line(b, "wall", [[232,357],[232,502]]);
line(b, "wall", [[1312.5,334],[1312.5,509]]);
poly(b, "soil", [[231,501],[278,501],[303,508],[303,510],[231,510]]);
poly(b, "soil", C([905,840, 980,824, 1118,824, 1118,841]));

function wheel(x, y, critical) {
  add(b, "circle", critical ? "tyre critical" : "tyre", {cx: x, cy: y, r: critical ? 34.5 : 35});
  add(b, "circle", "rim", {cx: x, cy: y, r: 23});
  add(b, "circle", "hub", {cx: x, cy: y, r: 4});
}
line(b, "axle", [[78,327.5],[217,323.5],[500,315.5],[730,309],[829,306.5],[940,303],[1045,300],[1133,298]]);
wheel(78, 327.3);
wheel(181.5, 323.7);
wheel(764.6, 305.3);
wheel(864.3, 302.7, true);
wheel(1080, 299);
poly(b, "arrow", C([587,181, 630,201, 587,224]));
add(b, "text", "postext", {x: 1079, y: 260}).textContent = "10130";

// load cones under the axles
poly(b, "cone", [[45,399],[67,357],[91,357],[111,399]]);
poly(b, "cone", [[150.5,399],[171,357],[194.5,357],[215,399]]);
poly(b, "cone active", B([712,272, 777,272, 835,396, 655,396]));
poly(b, "cone active", B([990,264, 1057,264, 1114,388, 932,393]));
poly(b, "cone active", C([386,314, 456,314, 517,439, 325,439]));

// soil pressures on the extrados
[
  B([624,424, 624,407, 634,398, 640,385, 650,372, 662,364, 690,358, 740,357, 780,361, 800,368, 812,378, 820,392, 828,405, 833,430, 793,425, 747,420, 700,418, 652,421]),
  B([897,447, 897,405, 904,403, 905,382, 913,370, 913,355, 922,350, 925,332, 935,325, 945,315, 970,308, 1000,314, 1022,328, 1040,345, 1058,368, 1070,388, 1088,412, 1100,430, 1115,452, 1130,474, 1150,494, 1172,518, 1190,536, 1203,548, 1203,570, 1196,567, 1153,540, 1110,516, 1065,496, 1021,481, 975,468, 930,455])
].forEach(function(pts) {
  poly(b, "pressure", pts);
  poly(b, "pressure shaded", pts).setAttribute("clip-path", "url(#surfacing)");
});
poly(b, "pressure", A([500,692, 520,693, 550,699, 590,706, 630,714, 630,724, 500,724]));
poly(b, "pressure", C([325,820, 400,797, 407,770, 420,730, 445,675, 475,635, 505,605, 540,591, 575,585, 608,583, 609,593, 571,607, 534,627, 501,653, 471,681, 445,712, 425,748, 410,786, 399,822]));
poly(b, "pressure", C([245,1022, 324,1022, 324,1033, 250,1033]));
line(b, "graze", arch2[2].out.slice(10));

// piers and footings
poly(b, "block", A([1089,731, 1165,718, 1241,718, 1241,733, 1089,733]));
[733,773,815,856,897].forEach(function(y, i, all) {
  var y2 = all[i + 1] || 939;
  poly(b, "block", A([1089,y, 1241,y, 1241,y2, 1089,y2]));
});
poly(b, "block", A([1089,939, 1241,936, 1311,936, 1311,941, 1417,962, 1089,962]));
poly(b, "block", A([1118,978, 1446,978, 1446,1001, 1118,1001]));
poly(b, "soil", A([1112,1002, 1452,1002, 1452,1105, 1112,1105]));
poly(b, "mark", A([1275,978, 1296,978, 1284,1004, 1266,1004]));

poly(b, "block", C([324,822, 399,822, 480,838, 481,841, 324,841]));
[841,880,919,959,998].forEach(function(y, i, all) {
  var y2 = all[i + 1] || 1038;
  poly(b, "block", C([324,y, 481,y, 481,y2, 324,y2]));
});
poly(b, "block", C([150,1070, 250,1034, 324,1034, 324,1038, 481,1038, 481,1071]));
poly(b, "block", C([142,1071, 481,1071, 481,1091, 142,1091]));
poly(b, "soil", C([136,1093, 487,1093, 487,1195, 136,1195]));
poly(b, "mark", C([231,1068, 262,1068, 269,1095, 238,1095]));

[arch1, arch2, arch3].forEach(drawArch);

line(b, "spread", [[111,399],[171,502]]);
line(b, "spread", [[150.5,399],[91,502]]);
line(b, "spread", [[215,399],[277,502]]);
line(b, "spread", B([652,402, 626,422]));
line(b, "spread", B([835,396, 834,430]));
line(b, "spread", B([932,395, 899,445]));
line(b, "spread", B([1114,388, 1200,568]));
line(b, "spread", C([325,439, 127,782]));
line(b, "spread", C([517,439, 608,593]));

// thrust lines
line(b, "thrust", A([633,727, 650,695, 680,655, 715,618, 770,578, 830,551, 860,549, 900,552, 950,560, 1000,574, 1050,598, 1090,625, 1120,655, 1145,685, 1166,720]));
line(b, "thrust", A([1177,733, 1172,780, 1160,855, 1148,890, 1123,938]));
line(b, "thrust wide", B([36,970, 100,880, 180,775, 260,705, 350,638, 460,578, 560,525, 640,488, 700,463, 745,452, 800,450, 850,453, 930,460, 985,478, 1040,515, 1090,560, 1150,630, 1200,695]));
line(b, "thrust wider", B([1150,630, 1200,695, 1240,745, 1280,795, 1320,870, 1350,935, 1375,1008]));
line(b, "thrust", C([462,838, 475,805, 495,770, 525,730, 560,700, 600,682, 650,667, 690,661, 740,661, 790,670, 840,690, 890,722, 935,765, 982,823]));
line(b, "thrust", C([440,841, 437,900, 445,950, 458,1000, 475,1038]));

A([633,727, 830,550, 1165,720]).concat(B([346,628, 928,469, 1271,767])).forEach(function(p) {
  add(b, "circle", "hinge", {cx: p[0], cy: p[1], r: 4.7});
});

// slice of the end elevation at the edge of the view
poly(b, "surface", [[1350,361],[1352,361],[1352,387],[1350,387]]);
[421,430,445,465,489,517,547,579,622,651,703,740,778,818,857,897].forEach(function(y) {
  line(b, "passive", C([1230, y, 1236, y]));
});
poly(b, "soil edge", [[1350,580],[1352,580],[1352,603],[1350,603]]);
[101,105,113,122,128,132,137].forEach(function(y) { line(b, "backing", [[1350, y], [1352, y]]); });

// ---- chart
var c = document.getElementById("chart");
var P = sheet(-4.5, -23, 3, 3);
var left = 82, right = 460, top_ = 27, bottom = 239;
var colW = (right - left) / 7, decade = (bottom - top_) / 5;
var i, j, x, y;

for (i = 0; i < 35; i++) {
  x = left + i * colW / 5;
  if (i % 5) line(c, "minor", [[x, top_], [x, bottom]]);
  line(c, "tick", [[x, top_], [x, top_ + 3]]);
}
for (i = 0; i < 5; i++) {
  for (j = 2; j < 10; j++) {
    y = bottom - (i + Math.log(j) / Math.LN10) * decade;
    line(c, "minor", [[left, y], [right, y]]);
    line(c, "tick", [[left - 2, y], [left + 1, y]]);
  }
}
["1", "10", "100", "1000", "1e+04", "1e+05"].forEach(function(t, n) {
  y = bottom - n * decade;
  line(c, "major", [[left, y], [right, y]]);
  line(c, "tick", [[left - 4, y], [left, y]]);
  add(c, "text", "axlabel y", {x: left - 5, y: y + 5}).textContent = t;
});
["-1e+04", "-4286", "1429", "7143", "1.286e+04", "1.857e+04", "2.429e+04", "3e+04"].forEach(function(t, n) {
  x = left + n * colW;
  line(c, "major", [[x, top_], [x, bottom]]);
  line(c, "tick", [[x, bottom], [x, bottom + 4]]);
  var label = add(c, "text", "axlabel", {});
  label.textContent = t;
  // centred below its tick, running down to the right
  var sx = x - label.getComputedTextLength() * 0.35 - 3;
  label.setAttribute("transform", "translate(" + sx + " 253) rotate(45)");
});
line(c, "axis", [[left, top_], [left, bottom], [right, bottom]]);

add(c, "text", "axtitle", {transform: "translate(37 134) rotate(-90)"}).textContent = "Adequacy Factor";
add(c, "text", "axtitle", {x: 271, y: 310}).textContent = "Position (mm)";

var s1 = P([498,343, 500,420, 507,465, 513,482, 518,492, 526,548, 531,585, 538,628, 541,645, 546,662, 554,671, 560,655, 566,647, 572,630, 578,640, 584,653, 592,652, 600,645, 605,632, 611,602, 616,560, 622,580, 629,610, 637,636, 643,650, 649,670, 655,683, 661,693, 668,704, 673,716, 690,722, 700,717, 712,714, 725,718, 740,721, 752,715, 760,697, 769,687, 777,674, 785,658, 794,637, 802,610, 811,575, 817,565, 825,604, 832,622, 838,635, 845,642, 850,630, 856,613, 863,615, 868,628, 875,638, 884,636, 890,622, 896,604, 903,569, 909,530, 915,488, 921,478, 929,456, 935,402, 937,299]);
var s2 = P([498,283, 503,382, 510,400, 515,424, 526,487, 533,548, 538,573, 543,590, 548,604, 556,608, 563,590, 572,571, 580,577, 588,585, 594,558, 600,538, 608,538, 614,577, 619,600, 624,628, 628,652, 636,664, 642,652, 650,643, 658,630, 668,640, 675,655, 688,665, 700,662, 712,655, 724,653, 741,664, 756,688, 770,700, 785,705, 800,715, 818,720, 833,714, 845,698, 862,688, 878,658, 893,630, 905,598, 912,612, 918,630, 926,634, 932,622, 940,610, 948,620, 956,618, 964,604, 972,610, 980,624, 996,650, 1010,672, 1020,683, 1040,686, 1062,681, 1086,688, 1108,684, 1120,678, 1132,656, 1146,632, 1156,605, 1164,590, 1178,592, 1186,570, 1195,567, 1215,569, 1230,573, 1238,588, 1244,594, 1255,588, 1262,570, 1268,550, 1271,530, 1276,503, 1284,452, 1292,430, 1304,378, 1307,190]);
line(c, "s1", s1);
s1.forEach(function(p) { add(c, "circle", "d1", {cx: p[0], cy: p[1], r: 2.4}); });
line(c, "s2", s2);
s2.forEach(function(p) { add(c, "circle", "d2", {cx: p[0], cy: p[1], r: 2.4}); });
add(c, "circle", "crit", {cx: 225, cy: 218.7, r: 4.7});

[[95, "Scenario 1", "d1", 2.5, 101], [159, "Scenario 2", "d2", 2.5, 165], [225.5, "Near Critical Cases", "near", 4, 234], [330.5, "Critical Case", "crit", 5, 340]].forEach(function(g) {
  add(c, "circle", g[2], {cx: g[0], cy: 335, r: g[3]});
  add(c, "text", "legend", {x: g[4], y: 339}).textContent = g[1];
});
```
